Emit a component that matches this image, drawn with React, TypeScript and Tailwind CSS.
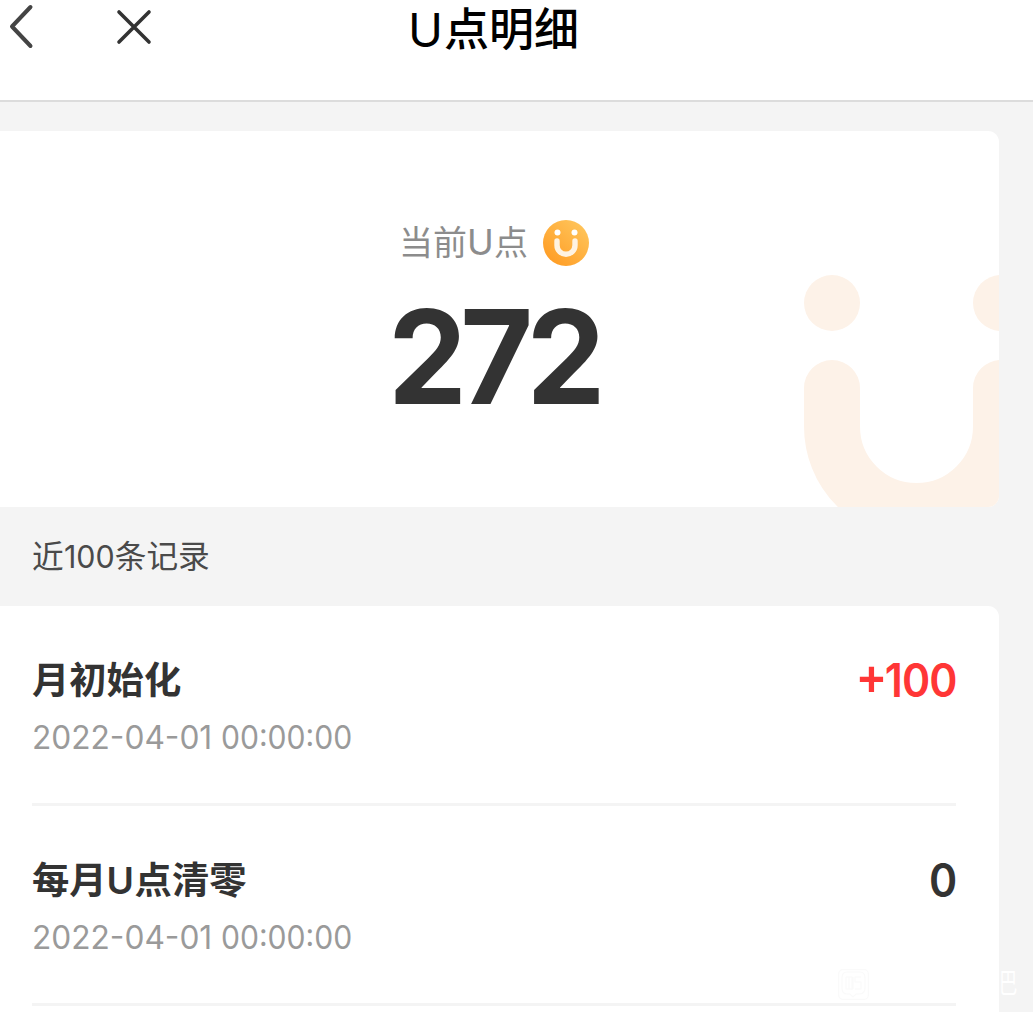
import React from "react";

type RecordItem = { title: React.ReactNode; date: string; time: string; amount: React.ReactNode; positive: boolean };

const records: RecordItem[] = [
  { title: "月初始化", date: "2022-04-01", time: "00:00:00", amount: <><span className="relative -top-[4px] mr-[-2px] text-[51px]">+</span>100</>, positive: true },
  { title: <>每月<span className="inline-block w-[28px] font-semibold">U</span>点清零</>, date: "2022-04-01", time: "00:00:00", amount: "0", positive: false },
];

function Header() {
  return (
    <header className="flex h-[102px] items-start border-b-2 border-[#dcdcdc] bg-white">
      <svg className="mt-[3px] ml-[8px] h-[48px] w-[28px] shrink-0" viewBox="8 3 28 48" fill="none" stroke="#444" strokeWidth="4" strokeLinecap="round" strokeLinejoin="round">
        <path d="M30.5 7 L12 26.5 L30.5 46" />
      </svg>
      <svg className="mt-[6px] ml-[77px] h-[42px] w-[42px] shrink-0" viewBox="113 6 42 42" fill="none" stroke="#333" strokeWidth="3.6" strokeLinecap="round">
        <path d="M119 12 L149 42 M149 12 L119 42" />
      </svg>
      <h1 className="ml-[253px] flex h-[60px] items-center whitespace-nowrap text-[45px] font-medium leading-[60px] text-black"><span className="w-[36px] text-[47px] font-normal">U</span>点明细</h1>
    </header>
  );
}

function CoinIcon() {
  return (
    <svg className="h-[46px] w-[46px]" viewBox="0 0 46 46" fill="none">
      <defs>
        <linearGradient id="coin" x1="38" y1="6" x2="8" y2="40" gradientUnits="userSpaceOnUse">
          <stop stopColor="#ffc257" />
          <stop offset="1" stopColor="#ff9f28" />
        </linearGradient>
      </defs>
      <circle cx="23" cy="23" r="23" fill="url(#coin)" />
      <circle cx="14.5" cy="12.4" r="3" fill="#fff" />
      <circle cx="31.5" cy="12.4" r="3" fill="#fff" />
      <path d="M14 21 V25.2 A9 9 0 0 0 32 25.2 V21" stroke="#fff3e2" strokeWidth="5.4" strokeLinecap="round" />
    </svg>
  );
}

function BalanceCard() {
  return (
    <section className="relative flex h-[376px] w-[999px] flex-col overflow-hidden rounded-r-[11px] bg-white">
      <svg className="absolute right-0 bottom-0 h-[232px] w-[195px]" viewBox="804 275 195 232" fill="none">
        <circle cx="832" cy="303" r="28" fill="#fdf2e8" />
        <circle cx="1001" cy="303" r="28" fill="#fdf2e8" />
        <path d="M832 388 V426.5 A84.5 84.5 0 0 0 1001 426.5 V388" stroke="#fdf2e8" strokeWidth="56" strokeLinecap="round" />
      </svg>
      <div className="mt-[89px] ml-[399px] flex h-[46px] items-center gap-[16px]">
        <span className="relative -top-px w-[128px] whitespace-nowrap text-[34px] leading-[46px] text-[#8c8c8c]">当前<span className="inline-block w-[27px] text-[36px]">U</span>点</span>
        <CoinIcon />
      </div>
      <div className="mt-[26px] ml-[388px] h-[130px] origin-left scale-x-[0.965] whitespace-nowrap text-[130px] font-[650] leading-[130px] tracking-[-7px] text-[#333]">272</div>
    </section>
  );
}

function RecordRow({ item }: { item: RecordItem }) {
  return (
    <li className="mr-[43px] ml-[32px] flex h-[200px] justify-between border-b-3 border-[#f4f4f4]">
      <div className="pt-[50px]">
        <div className="h-[50px] whitespace-nowrap text-[37.3px] font-bold leading-[50px] text-[#333]">{item.title}</div>
        <div className="mt-[11px] flex h-[42px] whitespace-nowrap text-[32px] leading-[42px] text-[#9a9a9a]">
          <span className="w-[189px] origin-left scale-x-[0.989]">{item.date}</span>
          <span className="origin-left scale-x-[0.94]">{item.time}</span>
        </div>
      </div>
      <div className={item.positive ? "mt-[49px] flex h-[50px] origin-right scale-x-[0.93] whitespace-nowrap text-[46px] font-semibold leading-[50px] tracking-[-1px] text-[#ff3636]" : "mt-[49px] h-[50px] origin-right scale-x-[0.93] whitespace-nowrap text-[46px] font-semibold leading-[50px] tracking-[-1px] text-[#333]"}>{item.amount}</div>
    </li>
  );
}

export default function App() {
  return (
    <div className="relative h-[1012px] w-[1033px] overflow-hidden bg-[#f4f4f4] font-['Inter','Noto_Sans_CJK_SC',sans-serif]">
      <Header />
      <main className="pt-[29px]">
        <BalanceCard />
        <h2 className="flex h-[99px] items-center pl-[32px] text-[31.7px] leading-[99px] text-[#4a4a4a]">近<span className="w-[51px] origin-left scale-x-[0.96]">100</span>条记录</h2>
        <ul className="h-[420px] w-[999px] rounded-tr-[11px] bg-white">
          {records.map((item, index) => (
            <RecordRow key={index} item={item} />
          ))}
        </ul>
      </main>
      <svg className="absolute top-[969px] left-[838px] h-[31px] w-[31px]" viewBox="0 0 31 31" fill="none" stroke="#fafafa" strokeWidth="1.2">
        <rect x="0.7" y="0.7" width="29.6" height="29.6" rx="4" />
        <path d="M9 3 H22 Q27 3 27 9 V19 Q27 25 21 25 H18 L15 28 L12 25 H9 Q4 25 4 19 V9 Q4 3 9 3 Z" />
        <path d="M8 8 H14 V21 M8 8 V20 H14 M11 8 V20 M23 8 H17 V13 H23 V20 H17 M15 8 V20" />
      </svg>
      <span className="absolute top-[970px] left-[999px] origin-left scale-x-[0.68] text-[27px] leading-[28px] text-white">巴</span>
    </div>
  );
}
